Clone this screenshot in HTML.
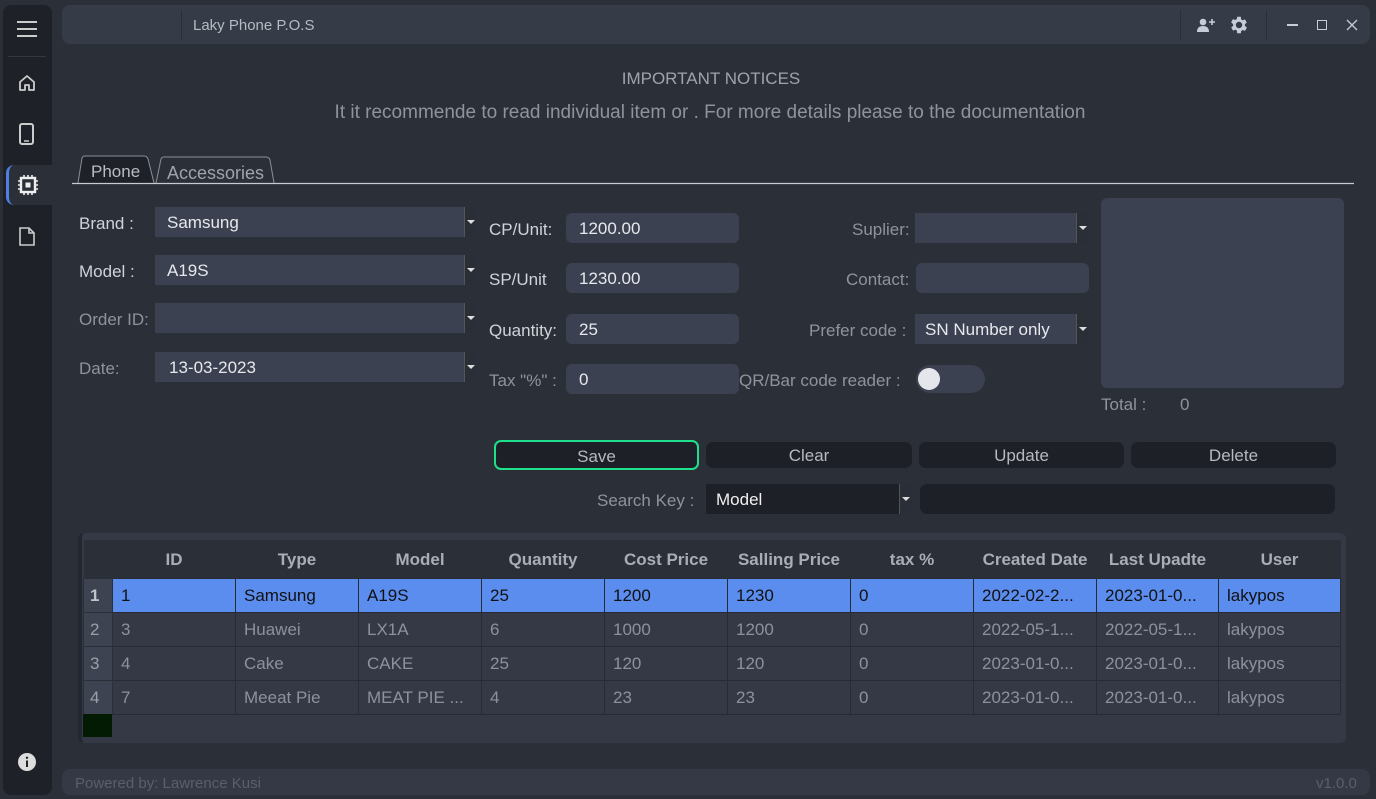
<!DOCTYPE html>
<html><head><meta charset="utf-8"><style>
*{box-sizing:border-box;margin:0;padding:0}
body{width:1376px;height:799px;background:#2b2f38;font-family:"Liberation Sans",sans-serif;position:relative;overflow:hidden;color:#c9ccd3}
.a{position:absolute}
.side{left:3px;top:5px;width:49px;height:790px;background:#1e2127;border-radius:8px}
.top{left:62px;top:5px;width:1308px;height:39px;background:#353b47;border-radius:8px}
.lbl{font-size:17px;color:#d0d3d9;white-space:nowrap}
.dim{color:#8e939c}
.inp{background:#3b4150;border-radius:6px;font-size:17px;color:#e6e8ec;padding-left:13px;line-height:32px;height:30px}
.cb{background:#3b4150;font-size:17px;color:#e6e8ec;padding-left:12px;line-height:32px;height:30px}
.cb::after{content:"";position:absolute;right:0;top:0;width:12px;height:30px;background:#2a2e36;border-left:1px solid #555}
.cb::before{content:"";position:absolute;right:2px;top:13px;border:4px solid transparent;border-top:4px solid #ddd;z-index:2}
.btn{background:#1e2027;border-radius:7px;height:26px;font-size:17px;text-align:center;line-height:28px;color:#b5b9c1}
table{border-collapse:collapse;font-size:17px}
td{border:1px solid #272b33;height:34px;padding-left:8px;color:#8c929c;white-space:nowrap;overflow:hidden;padding-top:2px}
th{height:38px;color:#a9aeb6;font-weight:bold;font-size:17px;padding-top:2px}
tr.sel td{background:#5b8def;color:#111}
td.rh{background:#3d4350;color:#9aa0aa;padding-left:6px;border-color:#2b2f38}
tr.sel td.rh{background:#3d4350;color:#c0c4cb;font-weight:bold}
</style></head><body>
<div class="a side"></div>
<div class="a" style="left:17px;top:21px;width:20px;height:2px;background:#ccc;box-shadow:0 7px 0 #ccc,0 14px 0 #ccc"></div>
<div class="a" style="left:8px;top:56px;width:38px;height:1px;background:#333740"></div>
<svg class="a" style="left:17px;top:73px" width="20" height="20" viewBox="0 0 20 20"><path d="M3 9 L10 3 L17 9 V17 H12 V12 H8 V17 H3 Z" fill="none" stroke="#ccc" stroke-width="1.8" stroke-linejoin="round"/></svg>
<svg class="a" style="left:19px;top:123px" width="16" height="23"><rect x="1" y="1" width="13" height="20" rx="2" fill="none" stroke="#ccc" stroke-width="2"/><line x1="5" y1="18" x2="10" y2="18" stroke="#ccc" stroke-width="1.5"/></svg>
<div class="a" style="left:6px;top:165px;width:46px;height:40px;background:#2b2f38;border-left:3px solid #4f7fe0;border-radius:8px 0 0 8px"></div>
<svg class="a" style="left:17px;top:174px" width="22" height="22" viewBox="0 0 22 22"><rect x="4" y="4" width="14" height="14" fill="none" stroke="#eee" stroke-width="2.4"/><rect x="8.5" y="8.5" width="5" height="5" fill="#eee"/><path d="M7 1v3M11 1v3M15 1v3M7 18v3M11 18v3M15 18v3M1 7h3M1 11h3M1 15h3M18 7h3M18 11h3M18 15h3" stroke="#eee" stroke-width="1.6"/></svg>
<svg class="a" style="left:19px;top:227px" width="16" height="19"><path d="M1 1 H10 L15 6 V18 H1 Z M10 1 V6 H15" fill="none" stroke="#ccc" stroke-width="1.6"/></svg>
<svg class="a" style="left:17px;top:752px" width="20" height="20"><circle cx="10" cy="10" r="9" fill="#ddd"/><rect x="9" y="8.5" width="2" height="6.5" fill="#1e2127"/><circle cx="10" cy="5.8" r="1.2" fill="#1e2127"/></svg>

<div class="a top"></div>
<div class="a" style="left:181px;top:10px;width:1px;height:30px;background:#2b2f38"></div>
<div class="a" style="left:193px;top:17px;font-size:15px;color:#b6bac2">Laky Phone P.O.S</div>
<div class="a" style="left:1180px;top:10px;width:1px;height:30px;background:#2b2f38"></div>
<div class="a" style="left:1266px;top:10px;width:1px;height:30px;background:#2b2f38"></div>
<svg class="a" style="left:1196px;top:17px" width="20" height="17"><circle cx="7" cy="5" r="3.3" fill="#c8ccd8"/><path d="M1 15 Q1 9 7 9 Q13 9 13 15 Z" fill="#c8ccd8"/><path d="M13 5h6M16 2v6" stroke="#c8ccd8" stroke-width="1.6"/></svg>
<svg class="a" style="left:1228px;top:14px" width="22" height="22" viewBox="0 0 24 24"><path fill="#c8ccd8" d="M19.4 13a7.5 7.5 0 0 0 0-2l2.1-1.6-2-3.5-2.5 1a7.5 7.5 0 0 0-1.7-1L15 3h-4l-.4 2.6a7.5 7.5 0 0 0-1.7 1l-2.5-1-2 3.5L6.6 11a7.5 7.5 0 0 0 0 2l-2.1 1.6 2 3.5 2.5-1a7.5 7.5 0 0 0 1.7 1L11 21h4l.4-2.6a7.5 7.5 0 0 0 1.7-1l2.5 1 2-3.5zM13 15.5a3.5 3.5 0 1 1 0-7 3.5 3.5 0 0 1 0 7z" transform="translate(-1 0)"/></svg>
<div class="a" style="left:1287px;top:24px;width:11px;height:1.5px;background:#c8ccd8"></div>
<div class="a" style="left:1317px;top:20px;width:10px;height:10px;border:1.3px solid #c8ccd8"></div>
<svg class="a" style="left:1346px;top:19px" width="12" height="12"><path d="M1 1L11 11M11 1L1 11" stroke="#c8ccd8" stroke-width="1.3"/></svg>

<div class="a" style="left:0;width:1422px;top:69px;text-align:center;font-size:17px;color:#9ea3ac">IMPORTANT NOTICES</div>
<div class="a" style="left:0;width:1420px;top:102px;text-align:center;font-size:19px;color:#8e939c">It it recommende to read individual item or . For more details please to the documentation</div>

<svg class="a" style="left:72px;top:155px" width="1282" height="32"><path d="M6 28 L10 3 Q11 1 13 1 H72 Q75 1 76 4 L82 28" fill="#1e2127" stroke="#8a8f98" stroke-width="1"/><path d="M84 28 L89 4 Q90 2 92 2 H194 Q197 2 198 5 L202 28" fill="none" stroke="#8a8f98" stroke-width="1"/><line x1="0" y1="28.5" x2="1282" y2="28.5" stroke="#c8ccd2" stroke-width="1.2"/></svg>
<div class="a" style="left:91px;top:162px;font-size:17px;color:#b8bcc4">Phone</div>
<div class="a" style="left:167px;top:163px;font-size:18px;color:#9ea3ac">Accessories</div>

<div class="a lbl" style="left:79px;top:214px">Brand :</div>
<div class="a cb" style="left:155px;top:207px;width:322px">Samsung</div>
<div class="a lbl" style="left:79px;top:262px">Model :</div>
<div class="a cb" style="left:155px;top:255px;width:322px">A19S</div>
<div class="a lbl dim" style="left:79px;top:310px">Order ID:</div>
<div class="a cb" style="left:155px;top:303px;width:322px"></div>
<div class="a lbl dim" style="left:79px;top:359px">Date:</div>
<div class="a cb" style="left:155px;top:352px;width:322px;padding-left:14px">13-03-2023</div>

<div class="a lbl" style="left:489px;top:220px">CP/Unit:</div>
<div class="a inp" style="left:566px;top:213px;width:173px">1200.00</div>
<div class="a lbl" style="left:489px;top:270px">SP/Unit</div>
<div class="a inp" style="left:566px;top:263px;width:173px">1230.00</div>
<div class="a lbl" style="left:489px;top:321px">Quantity:</div>
<div class="a inp" style="left:566px;top:314px;width:173px">25</div>
<div class="a lbl dim" style="left:489px;top:371px">Tax "%" :</div>
<div class="a inp" style="left:566px;top:364px;width:173px">0</div>

<div class="a lbl dim" style="left:852px;top:220px">Suplier:</div>
<div class="a cb" style="left:915px;top:213px;width:174px"></div>
<div class="a lbl dim" style="left:846px;top:270px">Contact:</div>
<div class="a inp" style="left:916px;top:263px;width:173px"></div>
<div class="a lbl dim" style="left:809px;top:321px">Prefer code :</div>
<div class="a cb" style="left:915px;top:314px;width:174px;padding-left:10px">SN Number only</div>
<div class="a lbl dim" style="left:739px;top:371px">QR/Bar code reader :</div>
<div class="a" style="left:916px;top:365px;width:69px;height:28px;background:#3b4150;border-radius:14px"></div>
<div class="a" style="left:918px;top:368px;width:22px;height:22px;background:#e4e6ec;border-radius:50%"></div>

<div class="a" style="left:1101px;top:198px;width:243px;height:190px;background:#3b4150;border-radius:6px"></div>
<div class="a lbl dim" style="left:1101px;top:395px">Total :</div>
<div class="a lbl dim" style="left:1180px;top:395px">0</div>

<div class="a btn" style="left:494px;top:440px;width:205px;height:30px;border:2px solid #1fe08a;line-height:30px">Save</div>
<div class="a btn" style="left:706px;top:442px;width:206px">Clear</div>
<div class="a btn" style="left:919px;top:442px;width:205px">Update</div>
<div class="a btn" style="left:1131px;top:442px;width:205px">Delete</div>
<div class="a lbl dim" style="left:597px;top:491px">Search Key :</div>
<div class="a cb" style="left:706px;top:484px;width:206px;background:#1e2027;padding-left:10px;color:#f0f0f0">Model</div>
<div class="a" style="left:920px;top:484px;width:415px;height:30px;background:#1e2027;border-radius:7px"></div>

<div class="a" style="left:78px;top:533px;width:1268px;height:210px;background:#343945;border-radius:6px;border-left:4px solid #232731"></div>
<table class="a" style="left:83px;top:540px;width:1258px;table-layout:fixed">
<colgroup><col style="width:29px"><col style="width:123px"><col style="width:123px"><col style="width:123px"><col style="width:123px"><col style="width:123px"><col style="width:123px"><col style="width:123px"><col style="width:123px"><col style="width:122px"><col style="width:122px"></colgroup>
<tr style="background:#2b2f38"><th></th><th>ID</th><th>Type</th><th>Model</th><th>Quantity</th><th>Cost Price</th><th>Salling Price</th><th>tax %</th><th>Created Date</th><th>Last Upadte</th><th>User</th></tr>
<tr class="sel"><td class="rh">1</td><td>1</td><td>Samsung</td><td>A19S</td><td>25</td><td>1200</td><td>1230</td><td>0</td><td>2022-02-2...</td><td>2023-01-0...</td><td>lakypos</td></tr>
<tr><td class="rh">2</td><td>3</td><td>Huawei</td><td>LX1A</td><td>6</td><td>1000</td><td>1200</td><td>0</td><td>2022-05-1...</td><td>2022-05-1...</td><td>lakypos</td></tr>
<tr><td class="rh">3</td><td>4</td><td>Cake</td><td>CAKE</td><td>25</td><td>120</td><td>120</td><td>0</td><td>2023-01-0...</td><td>2023-01-0...</td><td>lakypos</td></tr>
<tr><td class="rh">4</td><td>7</td><td>Meeat Pie</td><td>MEAT PIE ...</td><td>4</td><td>23</td><td>23</td><td>0</td><td>2023-01-0...</td><td>2023-01-0...</td><td>lakypos</td></tr>
</table>
<div class="a" style="left:83px;top:714px;width:29px;height:23px;background:#031a03"></div>

<div class="a" style="left:62px;top:769px;width:1308px;height:26px;background:#343945;border-radius:8px"></div>
<div class="a" style="left:75px;top:775px;font-size:15px;color:#5a5f69">Powered by: Lawrence Kusi</div>
<div class="a" style="left:1316px;top:775px;font-size:15px;color:#5a5f69">v1.0.0</div>
</body></html>
